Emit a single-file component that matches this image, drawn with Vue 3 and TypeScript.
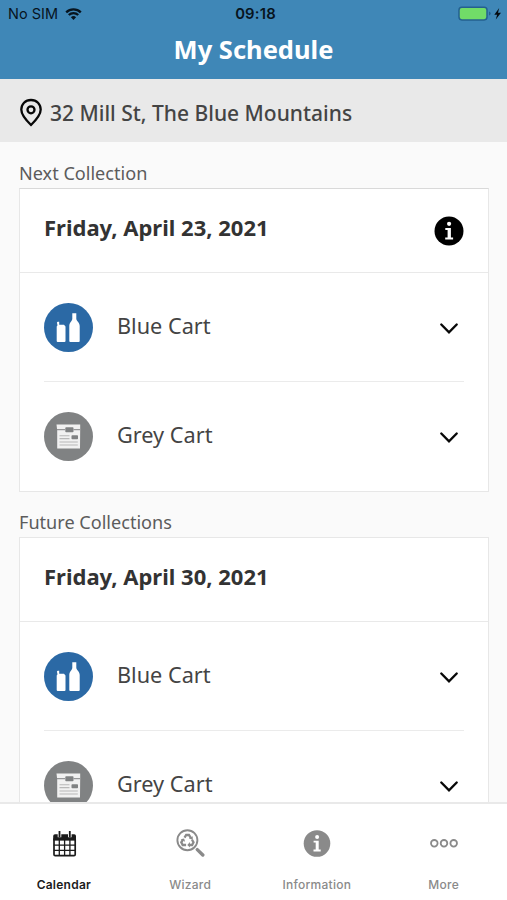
<script setup lang="ts">
interface Cart {
  name: string
  kind: 'blue' | 'grey'
}

interface Collection {
  heading: string
  date: string
  info: boolean
  carts: Cart[]
}

interface Tab {
  label: string
  icon: 'calendar' | 'wizard' | 'info' | 'more'
  active?: boolean
}

const carts: Cart[] = [
  { name: 'Blue Cart', kind: 'blue' },
  { name: 'Grey Cart', kind: 'grey' },
]

const collections: Collection[] = [
  { heading: 'Next Collection', date: 'Friday, April 23, 2021', info: true, carts },
  { heading: 'Future Collections', date: 'Friday, April 30, 2021', info: false, carts },
]

const tabs: Tab[] = [
  { label: 'Calendar', icon: 'calendar', active: true },
  { label: 'Wizard', icon: 'wizard' },
  { label: 'Information', icon: 'info' },
  { label: 'More', icon: 'more' },
]
</script>

<template>
  <div class="app">
    <header class="top">
      <div class="status">
        <div class="carrier">
          <span>No SIM</span>
          <svg class="wifi" viewBox="0 0 17 12">
            <path d="M1.2 4.4a10.4 10.4 0 0 1 14.6 0" />
            <path d="M3.8 7a6.7 6.7 0 0 1 9.4 0" />
            <path class="solid" d="M8.5 11.9 5.9 9.2a3.7 3.7 0 0 1 5.2 0z" />
          </svg>
        </div>
        <span class="clock">09:18</span>
        <div class="power">
          <svg class="battery" viewBox="0 0 44 16">
            <rect x="1" y="1.3" width="28" height="12.6" rx="2.8" fill="#71dc68" stroke="#24608f" stroke-width="1.5" />
            <path d="M31 5.6q1.7.4 1.7 2t-1.7 2z" fill="#24608f" />
            <path d="M41.2 2 36.3 8.7h2.8L37.8 13.5 43 6.7h-3z" fill="#050b10" />
          </svg>
        </div>
      </div>
      <h1>My Schedule</h1>
    </header>

    <div class="address">
      <svg class="pin" viewBox="0 0 24 30">
        <path d="M12 2C6.3 2 2.3 6.2 2.3 11.6 2.3 17.5 7.6 22.8 12 27c4.4-4.2 9.7-9.500 9.700-15.400C21.700 6.200 17.700 2 12 2z" />
        <circle cx="12" cy="11.800" r="3.500" />
      </svg>
      <span>32 Mill St, The Blue Mountains</span>
    </div>

    <main class="content">
      <section v-for="group in collections" :key="group.date" class="group">
        <h2>{{ group.heading }}</h2>
        <div class="card" :class="{ first: group.info }">
          <div class="card-head">
            <h3>{{ group.date }}</h3>
            <svg v-if="group.info" class="info" viewBox="0 0 30 30">
              <circle cx="15" cy="15" r="14.500" />
              <circle class="cut" cx="15.100" cy="7.800" r="2.100" />
              <path class="cut" d="M11.300 12h5.600v9.500h2.200v2h-7.900v-2h2.400V14h-2.300z" />
            </svg>
          </div>
          <div v-for="cart in group.carts" :key="cart.name" class="row">
            <svg v-if="cart.kind === 'blue'" class="cart" viewBox="0 0 49 49">
              <circle cx="24.500" cy="24.500" r="24.500" fill="#2b69a5" />
              <path d="M12.900 19.500 13.700 18.800h1.500v3h4.800l1.500 1.700V38q0 1-1 1h-6.800q-1 0-1-1V23.600l.8-1.300z" fill="#fff" />
              <path d="M28.300 10.300h4v5.400c.3 2.700 3.400 3.700 3.400 7.200V38q0 1-1 1h-8.400q-1 0-1-1V22.900c0-3.500 2.800-4.500 3-7.200z" fill="#fff" />
            </svg>
            <svg v-else class="cart" viewBox="0 0 49 49">
              <circle cx="24.500" cy="24.500" r="24.500" fill="#808283" />
              <path d="M12.500 12.500h23.700v3.800L36 36.500H13.200V18.500z" fill="#f1f1f1" />
              <path d="M13 17.700h8M29.500 17.700H36" stroke="#808283" stroke-width="1" />
              <rect x="21.300" y="15.300" width="8.200" height="5" rx=".8" fill="#808283" />
              <rect x="27.500" y="23.300" width="6.500" height="4" rx=".8" fill="#808283" />
              <path d="M15.500 23.800h10M15.500 26.600h10M15.500 30h18.300M15.500 33h18.300" stroke="#b8b8b8" stroke-width="1.100" />
            </svg>
            <span class="cart-name">{{ cart.name }}</span>
            <svg class="chevron" viewBox="0 0 20 14">
              <path d="M2.300 2.500 10 10.300l7.700-7.800" />
            </svg>
          </div>
        </div>
      </section>
    </main>

    <nav class="tabs">
      <div v-for="tab in tabs" :key="tab.label" class="tab" :class="{ active: tab.active }">
        <svg v-if="tab.icon === 'calendar'" class="tab-icon" viewBox="-.8 -1.300 30 30">
          <path d="M5.200 4h19.200a1.800 1.800 0 0 1 1.800 1.800V10H3.400V5.800A1.800 1.800 0 0 1 5.200 4z" fill="currentColor" />
          <rect x="4.200" y="8" width="21.200" height="17.400" rx="1.200" fill="none" stroke="currentColor" stroke-width="1.700" />
          <path d="M4 9.600h21.500M4 14.800h21.500M4 20.100h21.500M9.500 9.500V25M14.800 9.500V25M20.100 9.500V25" fill="none" stroke="currentColor" stroke-width="1.300" />
          <path d="M9.700 2v5M20 2v5" stroke="#fff" stroke-width="3.600" />
          <path d="M9.700 .7v6.300M20 .7v6.300" stroke="currentColor" stroke-width="1.800" />
        </svg>
        <svg v-else-if="tab.icon === 'wizard'" class="tab-icon" viewBox="-.6 0 30 30">
          <circle cx="11.800" cy="11.200" r="10" fill="none" stroke="currentColor" stroke-width="1.900" />
          <path d="m21.700 20.600 5.500 5.400" stroke="currentColor" stroke-width="3.400" stroke-linecap="round" />
          <g fill="none" stroke="currentColor" stroke-width="2.300">
            <path d="M8.900 8.700 10.600 6h2.800l1.800 2.900" />
            <path d="m16.400 10.700 1.500 2.600-1.400 2.700h-3.100" />
            <path d="M10.500 16H7.100l-1.400-2.700 1.500-2.500" />
          </g>
          <path d="m13.200 9.300 3.900-2 .1 3.600zM14.300 13v5.400l-2.600-2.500zM5 10.300l3.500-.8 1 3.300z" fill="currentColor" />
        </svg>
        <svg v-else-if="tab.icon === 'info'" class="tab-icon" viewBox="0 0 30 30">
          <circle cx="15" cy="14.500" r="13.300" fill="currentColor" />
          <circle cx="15.100" cy="8" r="2" fill="#fff" />
          <path d="M11.600 11.700h5.100v8.800h2v1.900h-7.200v-1.900h2.200v-6.900h-2.100z" fill="#fff" />
        </svg>
        <svg v-else class="tab-icon" viewBox="0 0 30 30">
          <g fill="none" stroke="currentColor" stroke-width="1.800">
            <circle cx="5.300" cy="14.300" r="3.300" />
            <circle cx="15" cy="14.300" r="3.300" />
            <circle cx="24.700" cy="14.300" r="3.300" />
          </g>
        </svg>
        <span>{{ tab.label }}</span>
      </div>
    </nav>
  </div>
</template>

<style>
body {
  margin: 0;
}
</style>

<style scoped>
.app {
  display: flex;
  flex-direction: column;
  width: 507px;
  height: 900px;
  overflow: hidden;
  background: #fafafa;
  color: #3a3a3a;
  font-family: 'Noto Sans', sans-serif;
}
.app * {
  box-sizing: border-box;
}
svg {
  display: block;
  flex: none;
}
h1,
h2,
h3 {
  margin: 0;
}
.top {
  flex: none;
  height: 79px;
  background: #3f87b7;
}
.status {
  display: grid;
  grid-template-columns: 1fr auto 1fr;
  align-items: center;
  height: 28px;
  padding: 0 5px 0 8px;
  color: #07141e;
  font: 14.5px/28px Inter, sans-serif;
}
.carrier {
  display: flex;
  align-items: center;
  gap: 7px;
}
.wifi {
  width: 17px;
  height: 12px;
  fill: none;
  stroke: #07141e;
  stroke-width: 2.3;
}
.wifi .solid {
  fill: #07141e;
  stroke: none;
}
.clock {
  padding-left: 1px;
  font-size: 14.8px;
  font-weight: 600;
  letter-spacing: 0.2px;
}
.power {
  display: flex;
  justify-content: flex-end;
}
.battery {
  width: 44px;
  height: 16px;
}
h1 {
  color: #fff;
  font-size: 25.5px;
  line-height: 43px;
  font-weight: 700;
  text-align: center;
}
.address {
  display: flex;
  flex: none;
  align-items: center;
  gap: 7px;
  height: 63px;
  padding: 4px 19px 0;
  background: #e9e9e9;
  color: #444;
  font-size: 21px;
  font-weight: 500;
}
.pin {
  width: 24px;
  height: 30px;
  fill: none;
  stroke: #080808;
  stroke-width: 2.3;
}
.content {
  flex: 1;
  min-height: 0;
  overflow: hidden;
  padding: 16px 18px 0 19px;
}
.group {
  margin-bottom: 15px;
}
h2 {
  height: 30px;
  color: #5c5c5c;
  font-size: 18.1px;
  line-height: 30px;
  font-weight: 400;
}
.card {
  height: 304px;
  border: 1px solid #e7e7e7;
  background: #fff;
}
.card.first {
  border-top-color: #d9d9d9;
}
.card-head {
  display: flex;
  align-items: center;
  justify-content: space-between;
  height: 84px;
  padding: 0 24px;
  border-bottom: 1px solid #e9e9e9;
}
h3 {
  padding-bottom: 7px;
  color: #333;
  font-size: 22px;
  font-weight: 700;
}
.info {
  width: 30px;
  height: 30px;
}
.info .cut {
  fill: #fff;
}
.row {
  display: flex;
  align-items: center;
  height: 108px;
  margin: 0 24px;
}
.row + .row {
  height: 110px;
  border-top: 1px solid #ebebeb;
}
.cart {
  width: 49px;
  height: 49px;
}
.cart-name {
  flex: 1;
  padding: 0 0 4px 24px;
  color: #444;
  font-size: 21.7px;
}
.chevron {
  width: 20px;
  height: 14px;
  margin: 3px 5px 0 0;
  fill: none;
  stroke: #080808;
  stroke-width: 2.4;
  stroke-linecap: round;
}
.tabs {
  display: grid;
  flex: none;
  grid-template-columns: repeat(4, 1fr);
  height: 98px;
  border-top: 2px solid #e9e9e9;
  background: #fff;
}
.tab {
  display: flex;
  flex-direction: column;
  align-items: center;
  padding-top: 25px;
  color: #8a8a8a;
  font: 500 12px/20px Inter, sans-serif;
  letter-spacing: 0.25px;
}
.tab.active {
  padding-left: 1px;
  color: #1b1b1b;
  font-weight: 600;
}
.tab-icon {
  width: 30px;
  height: 30px;
  margin-bottom: 16px;
}
</style>
